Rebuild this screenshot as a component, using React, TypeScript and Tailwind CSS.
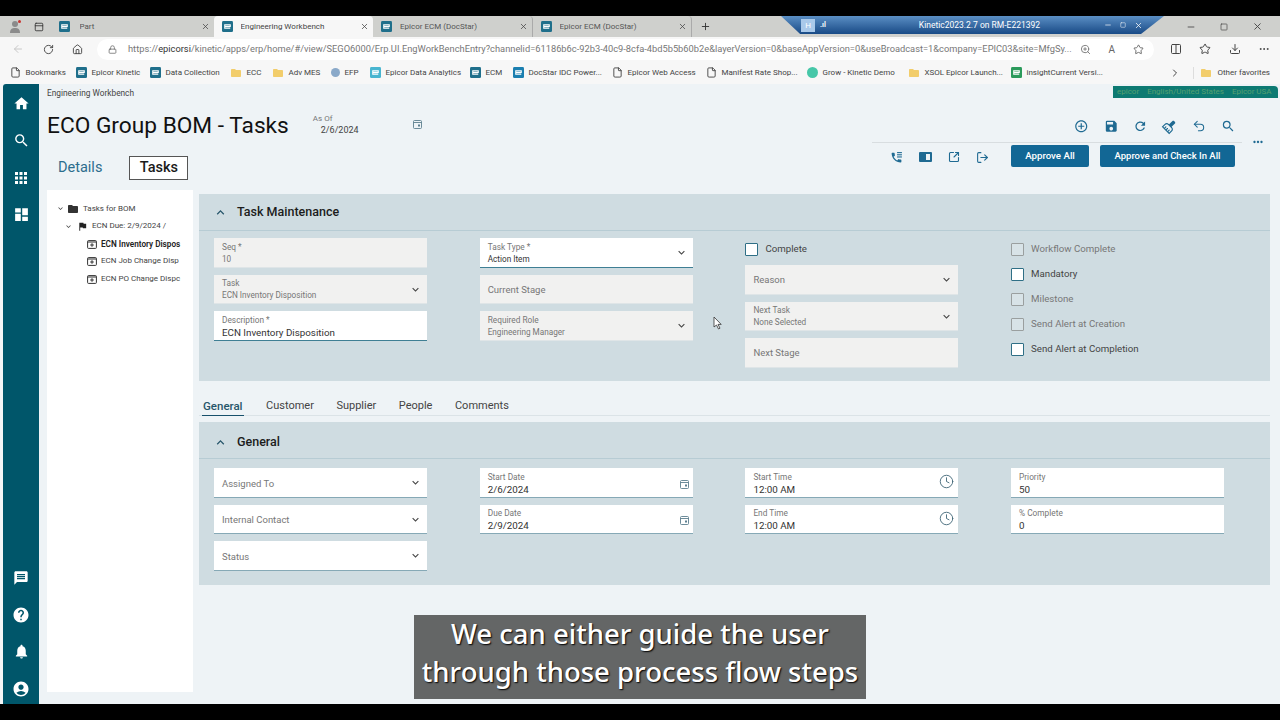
import React from "react";
import { MdHome, MdSearch, MdApps, MdDashboard, MdMessage, MdHelp, MdNotifications, MdAccountCircle, MdAddCircleOutline, MdSave, MdRefresh, MdCleaningServices, MdFolder, MdFlag, MdMoreHoriz, MdExpandMore, MdExpandLess } from "react-icons/md";
import { Clock, SquareArrowOutUpRight, LogOut, RotateCw, Home, Lock, ZoomIn, Star, Columns2, Download, MoreHorizontal, ChevronRight, Minus, Square, X, Plus, ArrowLeft, File, PanelTop, Undo2 } from "lucide-react";

const E = ({ c = "#1f6f8b" }: { c?: string }) => (
  <svg width="11" height="11" viewBox="0 0 12 12" className="shrink-0">
    <rect width="12" height="12" rx="1.5" fill={c} />
    <path d="M3 6h6V4.2H3v3.6h6" fill="none" stroke="#fff" strokeWidth="1.2" />
  </svg>
);

const Tab = ({ title, active, sep, first }: { title: string; active?: boolean; sep?: boolean; first?: boolean }) => (
  <div className={`flex items-center h-[21px] ${first ? "w-[163px] gap-[10px]" : "w-[159.5px] gap-[8px]"} pl-[8px] pr-[4px] rounded-t-[4px] ${active ? "bg-[#f7f7f7] text-[#444]" : "text-[#555]"} ${sep ? "border-r border-[#aaa]" : ""}`}>
    <E />
    <span className="flex-1 text-[8px] truncate">{title}</span>
    <X size={9} strokeWidth={2} className="text-[#444]" />
  </div>
);

const Bookmark = ({ icon, label, w }: { icon: React.ReactNode; label: string; w: string }) => (
  <div className={`flex items-center gap-[5px] ${w} shrink-0`}>
    {icon}
    <span className="text-[8px] text-[#444] whitespace-nowrap">{label}</span>
  </div>
);

const Folder = () => <MdFolder size={12} className="text-[#f2cd6b] shrink-0" />;
const Page = () => <File size={11} className="text-[#444] shrink-0" />;

const CalIcon = () => (
  <svg width="9" height="10" viewBox="0 0 9 10" className="text-[#5c7f8f] shrink-0">
    <rect x="0.5" y="1.5" width="8" height="8" rx="1" fill="none" stroke="currentColor" strokeWidth="0.9" />
    <path d="M0.5 3.5h8" stroke="currentColor" strokeWidth="0.9" />
    <rect x="5" y="5.5" width="2" height="2" fill="currentColor" />
  </svg>
);

const TreeTask = ({ label, bold }: { label: string; bold?: boolean }) => (
  <div className="flex items-center h-[17.5px] pl-[40px] gap-[4px]">
    <svg width="10" height="10" viewBox="0 0 10 10" className="shrink-0 text-[#333]">
      <rect x="0.6" y="1.6" width="8.8" height="7.8" rx="0.8" fill="none" stroke="currentColor" strokeWidth="1" />
      <path d="M0.6 3h8.8M5 4.2v3.6M3.2 6h3.6" stroke="currentColor" strokeWidth="1" />
    </svg>
    <span className={`whitespace-nowrap ${bold ? "text-[8.2px] font-semibold text-[#222]" : "text-[8px] text-[#444]"}`}>{label}</span>
  </div>
);

type FieldProps = {
  label: string;
  value?: string;
  white?: boolean;
  chevron?: boolean;
  right?: React.ReactNode;
  dark?: boolean;
  big?: boolean;
  teal?: boolean;
};

const Field = ({ label, value, white, chevron, right, dark, big, teal }: FieldProps) => (
  <div className={`relative h-[29.5px] flex items-center pl-[8px] pr-[4px] pt-[2.5px] ${white ? `bg-white border-b-[1.5px] ${teal ? "border-[#3f7f94]" : "border-[#86a9b6]"}` : "bg-[#f1f1f0] border-b border-[#dfe5e7]"}`}>
    <div className="flex-1 min-w-0">
      {value !== undefined ? (
        <>
          <div className="text-[8.3px] leading-[11px] text-[#767676]">{label}</div>
          <div className={`${big ? "text-[9.8px] leading-[13px]" : "text-[8.2px] leading-[13px]"} ${dark ? "text-[#333]" : "text-[#767676]"} whitespace-nowrap`}>{value}</div>
        </>
      ) : (
        <div className={`text-[9.5px] text-[#777] ${white ? "pt-[1px]" : ""}`}>{label}</div>
      )}
    </div>
    {chevron && <MdExpandMore size={13} className="text-[#444] shrink-0 mr-[1px] -mt-[2px]" />}
    {right}
  </div>
);

const Check = ({ label, on }: { label: string; on?: boolean }) => (
  <div className="flex items-center gap-[7px] h-[25px]">
    <span className={`w-[13px] h-[13px] rounded-[1px] border-[1.5px] ${on ? "border-[#2f6f86] bg-white" : "border-[#9a9f9f] bg-[#d8e3e7]"}`} />
    <span className={`text-[9.7px] ${on ? "text-[#444]" : "text-[#777]"}`}>{label}</span>
  </div>
);

const PanelHead = ({ title, low }: { title: string; low?: boolean }) => (
  <div className={`h-[37px] flex items-center pl-[14px] gap-[9px] border-b border-[#b7ccd4] ${low ? "pt-[4px]" : "pt-[1px]"}`}>
    <MdExpandLess size={15} className="text-[#27566a]" />
    <span className="text-[12.5px] font-medium text-[#1c1c1c]">{title}</span>
  </div>
);

const NavItem = ({ children }: { children: React.ReactNode }) => (
  <div className="h-[37px] flex items-center justify-center text-white shrink-0">{children}</div>
);

const ClockIcon = () => <Clock size={15} strokeWidth={1.4} className="text-[#3b6274] shrink-0 -mt-[4px]" />;

export default function App() {
  return (
    <div className="relative w-[1280px] h-[720px] bg-black overflow-hidden flex flex-col font-['Roboto',sans-serif]">
      <div className="h-[16px] shrink-0" />
      {/* tab strip */}
      <div className="h-[21px] shrink-0 bg-[#cfd0cd] flex items-center">
        <div className="w-[50.5px] flex items-center pl-[9px] gap-[12px] shrink-0">
          <svg width="13" height="15" viewBox="0 0 13 15"><circle cx="6" cy="5" r="3" fill="#8b8b8b" /><path d="M1 14c0-4 2-5 5-5s5 1 5 5z" fill="#8b8b8b" /><circle cx="10.5" cy="2.5" r="1.5" fill="#c8342f" /></svg>
          <PanelTop size={10} className="text-[#333]" />
        </div>
        <div className="flex items-center">
          <Tab title="Part" first />
          <Tab title="Engineering Workbench" active />
          <Tab title="Epicor ECM (DocStar)" sep />
          <Tab title="Epicor ECM (DocStar)" sep />
        </div>
        <Plus size={11} className="text-[#333] ml-[7.5px]" />
        <div className="flex-1" />
        <div className="flex items-center gap-[24px] pr-[17px] text-[#444]">
          <Minus size={10} />
          <Square size={8} />
          <X size={11} />
        </div>
      </div>
      {/* address bar */}
      <div className="h-[24px] shrink-0 bg-[#f7f7f7] flex items-center pl-[12px] pr-[10px]">
        <ArrowLeft size={12} className="text-[#c8c8c8]" />
        <RotateCw size={11} className="text-[#444] ml-[19px]" />
        <Home size={11} className="text-[#444] ml-[18px]" />
        <div className="flex-1 ml-[14px] mr-[16px] h-[21px] bg-white rounded-full flex items-center pl-[11px] pr-[10px]">
          <Lock size={9} className="text-[#666]" />
          <span className="ml-[11px] text-[9.3px] text-[#777] whitespace-nowrap w-[946px]">https://<span className="text-[#333]">epicorsi</span>/kinetic/apps/erp/home/#/view/SEGO6000/Erp.UI.EngWorkBenchEntry?channelid=61186b6c-92b3-40c9-8cfa-4bd5b5b60b2e&amp;layerVersion=0&amp;baseAppVersion=0&amp;useBroadcast=1&amp;company=EPIC03&amp;site=MfgSy...</span>
          <div className="flex-1" />
          <ZoomIn size={11} className="text-[#777]" />
          <span className="ml-[17px] text-[10px] text-[#666]">A</span>
          <Star size={11} className="text-[#666] ml-[18px]" />
        </div>
        <Columns2 size={12} className="text-[#444]" />
        <Star size={12} className="text-[#444] ml-[17px]" />
        <Download size={12} className="text-[#444] ml-[18px]" />
        <MoreHorizontal size={12} className="text-[#444] ml-[17px]" />
      </div>
      {/* bookmarks */}
      <div className="h-[23px] shrink-0 bg-[#f7f7f7] flex items-center pl-[9.5px] pr-[10px]">
        <Bookmark icon={<Page />} label="Bookmarks" w="w-[66px]" />
        <Bookmark icon={<E />} label="Epicor Kinetic" w="w-[74px]" />
        <Bookmark icon={<E />} label="Data Collection" w="w-[80px]" />
        <Bookmark icon={<Folder />} label="ECC" w="w-[42px]" />
        <Bookmark icon={<Folder />} label="Adv MES" w="w-[59px]" />
        <Bookmark icon={<span className="w-[9px] h-[9px] rounded-full bg-[#8aa9c9]" />} label="EFP" w="w-[39px]" />
        <Bookmark icon={<E c="#48b5d0" />} label="Epicor Data Analytics" w="w-[100px]" />
        <Bookmark icon={<E />} label="ECM" w="w-[43px]" />
        <Bookmark icon={<E c="#1b7fb0" />} label="DocStar IDC Power..." w="w-[99px]" />
        <Bookmark icon={<Page />} label="Epicor Web Access" w="w-[94px]" />
        <Bookmark icon={<Page />} label="Manifest Rate Shop..." w="w-[101px]" />
        <Bookmark icon={<span className="w-[11px] h-[11px] rounded-full bg-[#46c7a8]" />} label="Grow - Kinetic Demo" w="w-[101px]" />
        <Bookmark icon={<Folder />} label="XSOL Epicor Launch..." w="w-[103px]" />
        <Bookmark icon={<E c="#2b9a5b" />} label="insightCurrent Versi..." w="w-[105px]" />
        <div className="flex-1" />
        <ChevronRight size={12} className="text-[#444] mr-[12px]" />
        <div className="flex items-center gap-[5px] border-l border-[#ddd] pl-[6px]">
          <Folder />
          <span className="text-[8px] text-[#444]">Other favorites</span>
        </div>
      </div>
      {/* app */}
      <div className="h-[620px] shrink-0 bg-[#eef3f6] flex">
        <div className="w-[3px] bg-[#f4f6f7]" />
        <nav className="w-[36px] bg-[#00566a] rounded-tl-[3px] flex flex-col pt-[1px] overflow-hidden">
          <NavItem><MdHome size={17} /></NavItem>
          <NavItem><MdSearch size={17} /></NavItem>
          <NavItem><MdApps size={18} /></NavItem>
          <NavItem><MdDashboard size={17} className="-scale-x-100" /></NavItem>
          <div className="flex-1" />
          <div className="-mb-[3px]">
            <NavItem><MdMessage size={16} /></NavItem>
            <NavItem><MdHelp size={18} /></NavItem>
            <NavItem><MdNotifications size={17} /></NavItem>
            <NavItem><MdAccountCircle size={18} /></NavItem>
          </div>
        </nav>
        <main className="flex-1 flex flex-col min-w-0">
          {/* header */}
          <div className="h-[106px] shrink-0 flex">
            <div className="pl-[8px] flex-1">
              <div className="text-[8.3px] text-[#444] h-[18px] pt-[3px]">Engineering Workbench</div>
              <div className="flex items-start h-[54px] pt-[8px]">
                <h1 className="text-[22.7px] leading-[32px] text-[#111] whitespace-nowrap">ECO Group BOM - Tasks</h1>
                <div className="ml-[24px] mt-[4px] w-[100px]">
                  <div className="text-[8px] leading-[10px] text-[#777]">As Of</div>
                  <div className="text-[9px] leading-[12px] text-[#444] pl-[8px]">2/6/2024</div>
                </div>
                <div className="mt-[9px]"><CalIcon /></div>
              </div>
              <div className="flex items-center gap-[27px] pl-[11px]">
                <span className="text-[14.5px] text-[#2c6d8d]">Details</span>
                <span className="w-[59px] h-[24px] border border-[#555] bg-white text-[14.5px] font-medium text-[#1a1a1a] flex items-center justify-center">Tasks</span>
              </div>
            </div>
            <div className="w-[408px] shrink-0 flex flex-col pt-[35px]">
              <div className="w-[370px] h-[24px] flex items-start justify-end gap-[15px] border-b border-[#d8dde0] text-[#1f6a92] pr-[7px]">
                <MdAddCircleOutline size={14.5} />
                <MdSave size={14.5} />
                <MdRefresh size={14.5} />
                <MdCleaningServices size={14} className="rotate-45" />
                <Undo2 size={14} strokeWidth={1.8} />
                <MdSearch size={14.5} />
              </div>
              <div className="flex items-start pl-[18px] relative h-[30px] pt-[2px] text-[#1f6a92]">
                <div className="flex items-center gap-[16px] h-[24px]">
                  <svg width="13" height="13" viewBox="0 0 24 24" fill="currentColor">
                    <path d="M6.6 10.8c1.4 2.8 3.8 5.1 6.6 6.6l2.2-2.2c.3-.3.7-.4 1-.2 1.1.4 2.3.6 3.6.6.6 0 1 .4 1 1V20c0 .6-.4 1-1 1C10.6 21 3 13.4 3 4c0-.6.4-1 1-1h3.5c.6 0 1 .4 1 1 0 1.3.2 2.5.6 3.6.1.3 0 .7-.2 1z" />
                    <rect x="13" y="2" width="9" height="2" />
                    <rect x="13" y="6" width="9" height="2" />
                    <rect x="13" y="10" width="9" height="2" />
                  </svg>
                  <svg width="13" height="10" viewBox="0 0 13 10"><rect width="13" height="10" rx="1" fill="currentColor" /><rect x="7" y="2" width="4" height="6" fill="#eef3f6" /></svg>
                  <SquareArrowOutUpRight size={12} strokeWidth={2.2} />
                  <LogOut size={13} strokeWidth={2} />
                </div>
                <button className="ml-[22px] w-[78px] h-[22px] bg-[#126795] rounded-[2px] text-white text-[9.7px] font-medium">Approve All</button>
                <button className="ml-[11px] w-[135px] h-[22px] bg-[#126795] rounded-[2px] text-white text-[9.5px] font-medium">Approve and Check In All</button>
                <MdMoreHoriz size={14} className="absolute right-[15px] -top-[8px]" />
              </div>
            </div>
          </div>
          {/* body */}
          <div className="flex flex-1 min-h-0 pb-[12px]">
            <aside className="w-[146px] ml-[8px] bg-white shrink-0 pt-[10px]">
              <div className="flex items-center h-[17.5px] pl-[9px] gap-[4px]">
                <MdExpandMore size={9} className="text-[#444]" />
                <MdFolder size={12} className="text-[#333] -ml-[2px]" />
                <span className="text-[8px] text-[#444]">Tasks for BOM</span>
              </div>
              <div className="flex items-center h-[17.5px] pl-[17px] gap-[4px]">
                <MdExpandMore size={9} className="text-[#444]" />
                <MdFlag size={11} className="text-[#222]" />
                <span className="text-[8px] text-[#444]">ECN Due: 2/9/2024 /</span>
              </div>
              <TreeTask label="ECN Inventory Dispos" bold />
              <TreeTask label="ECN Job Change Disp" />
              <TreeTask label="ECN PO Change Dispc" />
            </aside>
            <div className="flex-1 ml-[6px] mr-[10px] min-w-0">
              <section className="mt-[4px] h-[187px] bg-[#cfdce1]">
                <PanelHead title="Task Maintenance" />
                <div className="grid grid-cols-[213px_213px_213px_213px] gap-x-[52.7px] pl-[15px] pt-[7px]">
                  <div className="flex flex-col gap-[7px]">
                    <Field label="Seq *" value="10" />
                    <Field label="Task" value="ECN Inventory Disposition" chevron />
                    <Field label="Description *" value="ECN Inventory Disposition" white dark big teal />
                  </div>
                  <div className="flex flex-col gap-[7px]">
                    <Field label="Task Type *" value="Action Item" white dark chevron teal />
                    <Field label="Current Stage" />
                    <Field label="Required Role" value="Engineering Manager" chevron />
                  </div>
                  <div className="flex flex-col gap-[7px]">
                    <div className="h-[20px] mt-[1px] -mb-[1px] flex items-center"><Check label="Complete" on /></div>
                    <Field label="Reason" chevron />
                    <Field label="Next Task" value="None Selected" chevron />
                    <Field label="Next Stage" />
                  </div>
                  <div className="flex flex-col -mt-[1px]">
                    <Check label="Workflow Complete" />
                    <Check label="Mandatory" on />
                    <Check label="Milestone" />
                    <Check label="Send Alert at Creation" />
                    <Check label="Send Alert at Completion" on />
                  </div>
                </div>
              </section>
              <div className="mt-[15px] h-[20px] flex items-start gap-[22.5px] border-b border-[#dbe3e7] pl-[4px] text-[11px] text-[#444] leading-[18px] pt-[1px]">
                <span className="h-[19px] border-b-[1.5px] border-[#17506b] text-[#27566a] font-medium text-[11.5px] -ml-[1px] px-[1px]">General</span>
                <span>Customer</span>
                <span>Supplier</span>
                <span>People</span>
                <span>Comments</span>
              </div>
              <section className="mt-[6px] h-[163px] bg-[#cfdce1]">
                <PanelHead title="General" low />
                <div className="grid grid-cols-[213px_213px_213px_213px] gap-x-[52.7px] pl-[15px] pt-[9px]">
                  <div className="flex flex-col gap-[7px]">
                    <Field label="Assigned To" white chevron />
                    <Field label="Internal Contact" white chevron />
                    <Field label="Status" white chevron />
                  </div>
                  <div className="flex flex-col gap-[7px]">
                    <Field label="Start Date" value="2/6/2024" white dark big right={<CalIcon />} />
                    <Field label="Due Date" value="2/9/2024" white dark big right={<CalIcon />} />
                  </div>
                  <div className="flex flex-col gap-[7px]">
                    <Field label="Start Time" value="12:00 AM" white dark big right={<ClockIcon />} />
                    <Field label="End Time" value="12:00 AM" white dark big right={<ClockIcon />} />
                  </div>
                  <div className="flex flex-col gap-[7px]">
                    <Field label="Priority" value="50" white dark big />
                    <Field label="% Complete" value="0" white dark big />
                  </div>
                </div>
              </section>
            </div>
          </div>
        </main>
      </div>
      {/* window title overlay */}
      <div className="absolute left-[781px] top-[16px] w-[383px] h-[18px] bg-gradient-to-b from-[#5b8fc4] to-[#184a86] [clip-path:polygon(0_0,100%_0,94%_100%,5%_100%)] flex items-center text-white">
        <span className="ml-[20px] w-[14px] h-[13px] bg-[#a9c9ea] text-[8px] text-center leading-[13px]">H</span>
        <span className="ml-[5px] text-[7px] font-bold">.ıl</span>
        <span className="ml-[93px] text-[8.5px] whitespace-nowrap">Kinetic2023.2.7 on RM-E221392</span>
        <Minus size={8} className="ml-[64px]" />
        <Square size={6} className="ml-[8px]" />
        <X size={9} className="ml-[8px]" />
      </div>
      {/* company tag */}
      <div className="absolute left-[1113px] top-[86px] w-[165px] h-[12px] bg-[#0d7a72] rounded-tr-[4px] flex items-center gap-[8px] pl-[4px] text-[8px] text-[#55a070] whitespace-nowrap">
        <span>epicor</span><span>English/United States</span><span>Epicor USA</span>
      </div>
      {/* cursor */}
      <svg className="absolute left-[713px] top-[316px]" width="10" height="14" viewBox="0 0 10 14"><path d="M1 1v10l2.5-2 2 4 1.5-.8-2-3.8h3.2z" fill="#fff" stroke="#333" strokeWidth="0.8" /></svg>
      {/* caption */}
      <div className="absolute left-[414px] top-[615px] w-[452px] h-[84px] bg-[#646666] flex flex-col items-center text-white text-[27.5px] font-medium leading-[38px] font-['Noto_Sans',sans-serif] whitespace-nowrap [text-shadow:1px_1px_1.5px_#000]">
        <span>We can either guide the user</span>
        <span>through those process flow steps</span>
      </div>
    </div>
  );
}
